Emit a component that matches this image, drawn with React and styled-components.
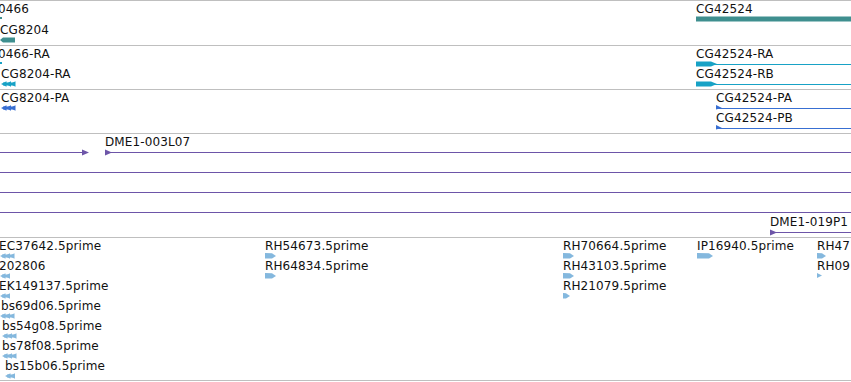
import React from 'react';
import styled, { createGlobalStyle } from 'styled-components';

const VIEW_W = 851;

const COLORS = {
  gene: '#3f8f8f',
  mrna: '#18a2c6',
  cds: '#386fd2',
  clone: '#6d55a8',
  est: '#84b8de',
  rule: '#bfbfbf',
  text: '#111111',
};

const GlobalStyle = createGlobalStyle`
  html, body { margin: 0; padding: 0; background: #ffffff; }
  body { font-family: "DejaVu Sans", "Liberation Sans", sans-serif; }
`;

const View = styled.main`
  width: ${VIEW_W}px;
  height: 382px;
  overflow: hidden;
  display: flex;
  flex-direction: column;
  background: #ffffff;
`;

const Track = styled.section`
  position: relative;
  flex: none;
  height: ${(p) => p.$h}px;
  border-top: 1px solid ${COLORS.rule};
  overflow: hidden;
  &:last-child {
    border-bottom: 1px solid ${COLORS.rule};
  }
`;

const Feature = styled.div`
  position: absolute;
  left: ${(p) => p.$x}px;
  top: ${(p) => p.$y}px;
  display: flex;
  flex-direction: column;
  align-items: flex-start;
`;

const Label = styled.span`
  display: block;
  height: 14px;
  margin-top: 1px;
  margin-left: ${(p) => p.$dx || 0}px;
  font-size: 12px;
  line-height: 14px;
  letter-spacing: 0.12px;
  color: ${COLORS.text};
  white-space: nowrap;
`;

const GlyphSvg = styled.svg`
  display: block;
  overflow: visible;
`;

/* ---------- glyph drawings ---------- */

const Dot = ({ color }) => (
  <GlyphSvg width={2} height={6}>
    <rect x={0} y={1} width={2} height={2} fill={color} />
  </GlyphSvg>
);

const GeneBar = ({ w, left }) => (
  <GlyphSvg width={w} height={6}>
    {left ? (
      <polygon points={`0,3 3,0.5 ${w},0.5 ${w},5.5 3,5.5`} fill={COLORS.gene} />
    ) : (
      <rect x={0} y={0.5} width={w} height={5} fill={COLORS.gene} />
    )}
  </GlyphSvg>
);

const Transcript = ({ w }) => (
  <GlyphSvg width={w} height={6}>
    <rect x={0} y={3} width={w} height={1} fill={COLORS.mrna} />
    <polygon points="0,0.5 15,0.5 21,3 15,5.5 0,5.5" fill={COLORS.mrna} />
  </GlyphSvg>
);

const Chevrons = ({ n, color }) => {
  const w = 5 + (n - 1) * 4.5;
  return (
    <GlyphSvg width={w} height={6}>
      {Array.from({ length: n }, (_, i) => {
        const x = i * 4.5;
        return <polygon key={i} points={`${x},3 ${x + 5.5},0.3 ${x + 5.5},5.7`} fill={color} />;
      })}
      <rect x={2} y={1.5} width={w - 2} height={3} fill={color} />
    </GlyphSvg>
  );
};

const CdsArrow = ({ w }) => (
  <GlyphSvg width={w} height={6}>
    <rect x={0} y={3} width={w} height={1} fill={COLORS.cds} />
    <polygon points="0,0 6,3 0,4.5" fill={COLORS.cds} />
  </GlyphSvg>
);

const CloneLine = ({ w, tip }) => (
  <GlyphSvg width={w} height={7}>
    {tip === 'end' ? (
      <>
        <rect x={0} y={3} width={w - 6} height={1} fill={COLORS.clone} />
        <polygon points={`${w - 7},0.5 ${w},3.5 ${w - 7},6.5`} fill={COLORS.clone} />
      </>
    ) : (
      <rect x={0} y={3} width={w} height={1} fill={COLORS.clone} />
    )}
    {tip === 'start' && <polygon points="0,0.5 7,3.5 0,6.5" fill={COLORS.clone} />}
  </GlyphSvg>
);

const Pointer = ({ w }) => (
  <GlyphSvg width={w} height={6}>
    {w <= 6 ? (
      <polygon points={`0,0 ${w},2.5 0,5`} fill={COLORS.est} />
    ) : (
      <polygon points={`0,0 ${w - 4},0.3 ${w},3 ${w - 4},5.5 0,5.5`} fill={COLORS.est} />
    )}
  </GlyphSvg>
);

/* ---------- data ---------- */

const geneTrack = [
  { x: 0, y: 0, dx: -2, label: '0466', glyph: <Dot color={COLORS.gene} /> },
  { x: 0, y: 21, label: 'CG8204', glyph: <GeneBar w={15} left /> },
  { x: 696, y: 0, label: 'CG42524', glyph: <GeneBar w={VIEW_W - 696} /> },
];

const mrnaTrack = [
  { x: 0, y: 0, dx: -2, label: '0466-RA', glyph: <Dot color={COLORS.mrna} /> },
  { x: 1, y: 20, dx: 0, label: 'CG8204-RA', glyph: <Chevrons n={3} color={COLORS.mrna} /> },
  { x: 696, y: 0, label: 'CG42524-RA', glyph: <Transcript w={VIEW_W - 696} /> },
  { x: 696, y: 20, label: 'CG42524-RB', glyph: <Transcript w={VIEW_W - 696} /> },
];

const cdsTrack = [
  { x: 1, y: 0, dx: 0, label: 'CG8204-PA', glyph: <Chevrons n={3} color={COLORS.cds} /> },
  { x: 716, y: 0, label: 'CG42524-PA', glyph: <CdsArrow w={VIEW_W - 716} /> },
  { x: 716, y: 20, label: 'CG42524-PB', glyph: <CdsArrow w={VIEW_W - 716} /> },
];

const cloneTrack = [
  { x: 0, y: 0, label: '', glyph: <CloneLine w={89} tip="end" /> },
  { x: 105, y: 0, label: 'DME1-003L07', glyph: <CloneLine w={VIEW_W - 105} tip="start" /> },
  { x: 0, y: 20, label: '', glyph: <CloneLine w={VIEW_W} /> },
  { x: 0, y: 40, label: '', glyph: <CloneLine w={VIEW_W} /> },
  { x: 0, y: 60, label: '', glyph: <CloneLine w={VIEW_W} /> },
  { x: 770, y: 80, label: 'DME1-019P1', glyph: <CloneLine w={VIEW_W - 770} tip="start" /> },
];

const estTrack = [
  { x: 0, y: 0, dx: -1, label: 'EC37642.5prime', glyph: <Chevrons n={3} color={COLORS.est} /> },
  { x: 0, y: 20, dx: -1, label: '202806', glyph: <Chevrons n={2} color={COLORS.est} /> },
  { x: 0, y: 40, dx: -1, label: 'EK149137.5prime', glyph: <Chevrons n={2} color={COLORS.est} /> },
  { x: 0, y: 60, dx: 1, label: 'bs69d06.5prime', glyph: <Chevrons n={3} color={COLORS.est} /> },
  { x: 2, y: 80, dx: 0, label: 'bs54g08.5prime', glyph: <Chevrons n={3} color={COLORS.est} /> },
  { x: 2, y: 100, dx: 0, label: 'bs78f08.5prime', glyph: <Chevrons n={3} color={COLORS.est} /> },
  { x: 5, y: 120, dx: 0, label: 'bs15b06.5prime', glyph: <Chevrons n={2} color={COLORS.est} /> },
  { x: 265, y: 0, label: 'RH54673.5prime', glyph: <Pointer w={11} /> },
  { x: 265, y: 20, label: 'RH64834.5prime', glyph: <Pointer w={11} /> },
  { x: 563, y: 0, label: 'RH70664.5prime', glyph: <Pointer w={11} /> },
  { x: 563, y: 20, label: 'RH43103.5prime', glyph: <Pointer w={11} /> },
  { x: 563, y: 40, label: 'RH21079.5prime', glyph: <Pointer w={7} /> },
  { x: 697, y: 0, label: 'IP16940.5prime', glyph: <Pointer w={16} /> },
  { x: 817, y: 0, label: 'RH47', glyph: <Pointer w={9} /> },
  { x: 817, y: 20, label: 'RH09', glyph: <Pointer w={5} /> },
];

const tracks = [
  { id: 'genes', h: 44, features: geneTrack },
  { id: 'mrna', h: 43, features: mrnaTrack },
  { id: 'cds', h: 43, features: cdsTrack },
  { id: 'clones', h: 103, features: cloneTrack },
  { id: 'est', h: 142, features: estTrack },
];

export default function App() {
  return (
    <>
      <GlobalStyle />
      <View>
        {tracks.map((t) => (
          <Track key={t.id} $h={t.h}>
            {t.features.map((f, i) => (
              <Feature key={i} $x={f.x} $y={f.y}>
                <Label $dx={f.dx}>{f.label}</Label>
                {f.glyph}
              </Feature>
            ))}
          </Track>
        ))}
      </View>
    </>
  );
}
